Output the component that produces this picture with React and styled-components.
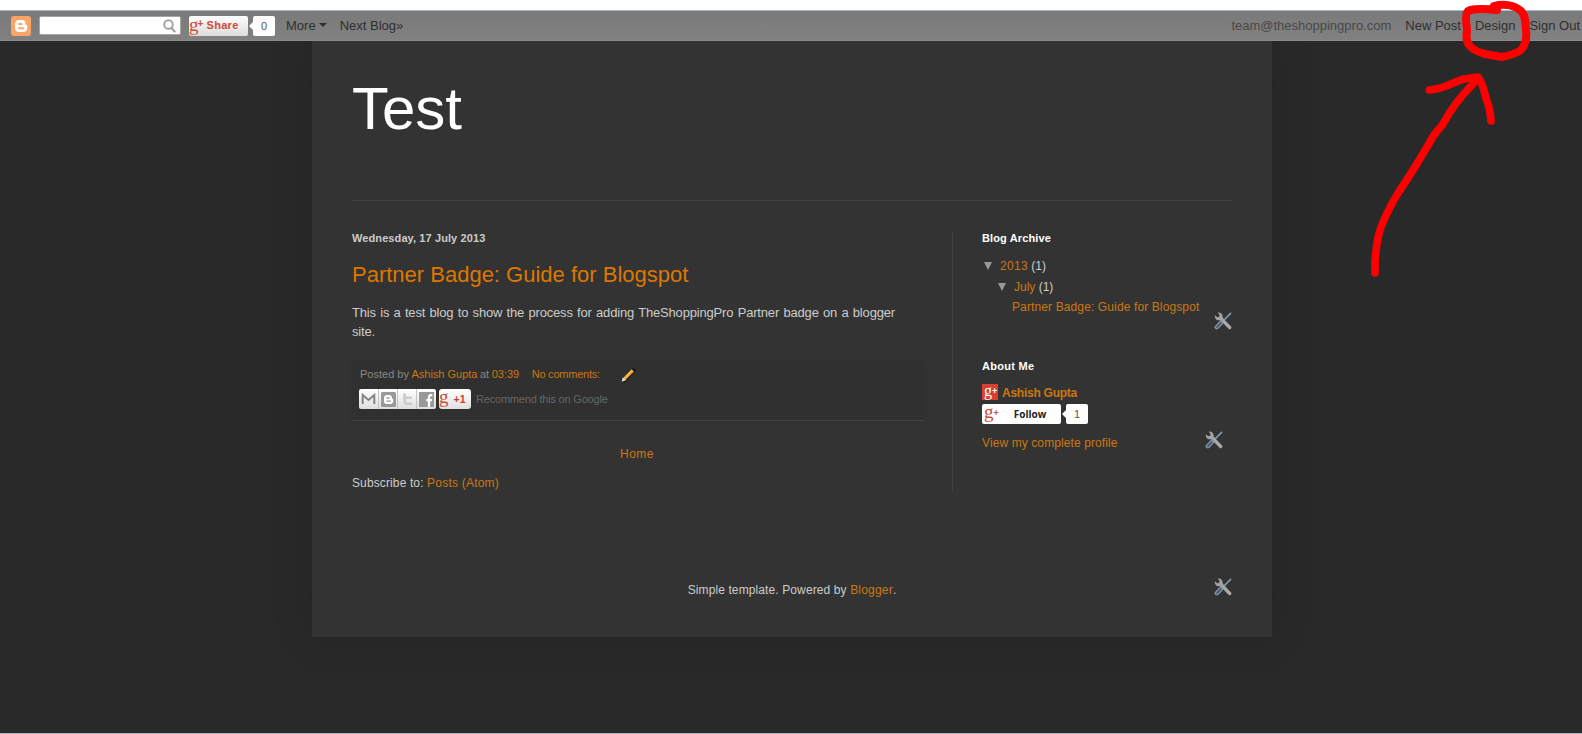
import React from "react";
import styled, { createGlobalStyle } from "styled-components";

const Global = createGlobalStyle`
  * { box-sizing: border-box; }
  html, body, #root { height: 100%; }
  body {
    margin: 0;
    background: #292929;
    font-family: "Liberation Sans", Arial, sans-serif;
    font-size: 12px;
    line-height: 20px;
    color: #ccc;
    overflow: hidden;
  }
`;

const Page = styled.div`
  position: relative;
  display: flex;
  flex-direction: column;
  height: 734px;
  border-bottom: 1px solid #a9b8c4;
`;

const TopStrip = styled.div`
  flex: none;
  height: 11px;
  background: #fff;
  border-bottom: 1px solid #a3bccf;
`;

const NavBar = styled.nav`
  flex: none;
  position: relative;
  z-index: 1;
  display: flex;
  justify-content: space-between;
  height: 30px;
  padding: 5px 2px 0 11px;
  background: linear-gradient(#7a7a7a, #818181);
  border-bottom: 1px solid #8a8a8a;
`;

const NavGroup = styled.div`
  display: flex;
  align-items: flex-start;
`;

const NavLink = styled.a`
  display: flex;
  align-items: center;
  height: 20px;
  margin-left: ${(p) => p.$gap}px;
  font-size: 13px;
  color: ${(p) => (p.$muted ? "#484848" : "#2f2f2f")};
  white-space: nowrap;
`;

const Caret = styled.i`
  margin: -2px 0 0 3px;
  border: 4px solid transparent;
  border-top-color: #2f2f2f;
  border-bottom: 0;
`;

const SearchBox = styled.div`
  display: flex;
  align-items: center;
  justify-content: flex-end;
  width: 142px;
  height: 19px;
  margin-left: 8px;
  padding-right: 4px;
  background: #fff;
  border: 1px solid #a5a5a5;
  border-radius: 2px;
`;

const ShareButton = styled.div`
  display: flex;
  width: 59px;
  height: 20px;
  margin-left: 8px;
  background: linear-gradient(#fefefe, #dcdcdc);
  border-radius: 2px;
  color: #cf4a37;
  font-size: 11px;
  font-weight: bold;
  line-height: 18px;
  letter-spacing: 0.3px;
`;

const SerifG = styled.span`
  font-family: "Liberation Serif", serif;
  font-weight: normal;
  font-size: ${(p) => p.$size}px;
  line-height: ${(p) => p.$line}px;
  letter-spacing: 0;
  color: ${(p) => p.$color || "#cf4a37"};
`;

const SharePlus = styled.span`
  width: 9px;
  margin-left: -1px;
  font-size: 10px;
  line-height: 16px;
`;

const Bubble = styled.div`
  position: relative;
  width: 22px;
  height: 20px;
  margin-left: ${(p) => p.$gap}px;
  background: #fff;
  border-radius: 2px;
  text-align: center;
  font-size: 11px;
  color: #555;
  &::before {
    content: "";
    position: absolute;
    left: -4px;
    top: 6px;
    border: 4px solid transparent;
    border-right-color: #fff;
    border-left: 0;
  }
`;

const Content = styled.main`
  flex: none;
  width: 960px;
  height: 596px;
  margin-left: 312px;
  padding: 0 40px;
  background: #333;
  box-shadow: 0 0 40px rgba(0, 0, 0, 0.12);
`;

const Header = styled.header`
  height: 160px;
  padding-top: 34px;
  border-bottom: 1px solid #404040;
`;

const BlogTitle = styled.h1`
  margin: 0;
  font-size: 60px;
  line-height: 68px;
  font-weight: normal;
  color: #fff;
`;

const Columns = styled.div`
  display: flex;
  height: 265px;
  margin-top: 27px;
`;

const Main = styled.section`
  width: 572px;
`;

const Divider = styled.div`
  width: 1px;
  height: 260px;
  margin: 4px 29px 0 28px;
  background: #424242;
`;

const Sidebar = styled.aside`
  width: 250px;
`;

const Heading = styled.h2`
  margin: 0;
  font-size: 11px;
  line-height: 20px;
  font-weight: bold;
  letter-spacing: ${(p) => p.$ls || 0}px;
  color: ${(p) => (p.$dim ? "#ccc" : "#fff")};
`;

const PostTitle = styled.h3`
  margin: 14px 0 15px;
  font-size: 22px;
  line-height: 26px;
  font-weight: normal;
  color: #dd7700;
`;

const PostBody = styled.p`
  width: 543px;
  margin: 0 0 20px;
  font-size: 13px;
  line-height: 19px;
  letter-spacing: -0.17px;
  text-align: justify;
`;

const Link = styled.a`
  color: #cc7711;
  letter-spacing: ${(p) => p.$ls || 0}px;
  font-weight: ${(p) => (p.$bold ? "bold" : "normal")};
`;

const PostFooter = styled.div`
  height: 60px;
  padding: 3px 8px 0;
  background: #303030;
  border-bottom: 1px solid #444;
  box-shadow: 0 0 3px #303030;
  font-size: 11px;
  color: #888;
`;

const Byline = styled.div`
  display: flex;
  height: 20px;
  gap: 2.5px;
  white-space: nowrap;
`;

const Comments = styled(Link)`
  margin: 0 19px 0 10px;
`;

const EditMark = styled.span`
  margin-top: 3px;
`;

const Reactions = styled.div`
  display: flex;
  height: 20px;
  margin: 5px 0 0 -1px;
  white-space: nowrap;
`;

const ShareStrip = styled.div`
  display: flex;
  width: 77px;
  background: linear-gradient(#fff, #dedede);
  border-radius: 2px;
`;

const ShareCell = styled.span`
  display: flex;
  align-items: center;
  justify-content: center;
  width: 19px;
  height: 20px;
  & + & { border-left: 1px solid #c4c4c4; }
`;

const PlusOne = styled.div`
  display: flex;
  width: 32px;
  margin: 0 5px 0 3px;
  background: linear-gradient(#fff, #e0e0e0);
  border-radius: 3px;
  color: #c8402f;
  font-weight: bold;
  font-size: 10.5px;
`;

const PlusCount = styled.span`
  margin-left: 5px;
`;

const Recommend = styled.span`
  color: #666;
  line-height: 21px;
  letter-spacing: -0.2px;
`;

const HomeRow = styled.div`
  margin-top: 23px;
  padding-right: 2px;
  text-align: center;
`;

const Subscribe = styled.div`
  margin-top: 9px;
  letter-spacing: 0.12px;
`;

const ArchiveRow = styled.div`
  display: flex;
  align-items: center;
  height: 20px;
  margin-top: ${(p) => p.$top}px;
  padding-left: ${(p) => p.$indent}px;
  white-space: pre;
`;

const Triangle = styled.i`
  margin: 0 8px 0 0;
  border: 4px solid transparent;
  border-top: 8px solid #999;
  border-bottom: 0;
`;

const ToolRow = styled.div`
  display: flex;
  justify-content: flex-end;
  height: 18px;
  margin-top: ${(p) => p.$top}px;
`;

const Profile = styled.div`
  display: flex;
  gap: 4px;
  height: 16px;
  margin-top: 8px;
  line-height: 18px;
`;

const GoogleTile = styled.span`
  display: flex;
  width: 16px;
  height: 16px;
  padding-left: 2px;
  background: #d5402f;
  color: #fff;
  font: bold 9px/15px "Liberation Sans", sans-serif;
`;

const FollowRow = styled.div`
  display: flex;
  height: 20px;
  margin-top: 4px;
`;

const FollowButton = styled.div`
  display: flex;
  width: 79px;
  height: 20px;
  padding-left: 2px;
  background: #fff;
  border-radius: 2px;
  color: #cf4a37;
  font-size: 9px;
  font-weight: bold;
  line-height: 19px;
`;

const FollowText = styled.span`
  margin-left: 15px;
  color: #222;
  font: bold 10px/20px "Open Sans", sans-serif;
`;

const ProfileLinkRow = styled.div`
  display: flex;
  justify-content: space-between;
  height: 20px;
  margin-top: 7px;
  padding-right: 9px;
  line-height: 24px;
`;

const Footer = styled.footer`
  display: grid;
  grid-template-columns: 18px 1fr 18px;
  margin-top: 87px;
  line-height: 20px;
  letter-spacing: 0.11px;
  text-align: center;
`;

const FooterTool = styled.span`
  height: 18px;
  margin-top: -2px;
`;

const Annotation = styled.svg`
  position: absolute;
  left: 1360px;
  top: 0;
  z-index: 2;
`;

const Block = styled.svg`
  display: block;
  flex: none;
`;

function BloggerIcon({ size, bg, radius = 3 }) {
  return (
    <Block width={size} height={size} viewBox="0 0 20 20">
      <rect width="20" height="20" rx={radius} fill={bg} />
      <path
        d="M8 4h3.200c2 0 3.300 1.500 3.300 3.200v.8c.1.8.5.9 1 .9.5.1.7.4.7.8v2.500c0 2.300-1.600 3.800-3.800 3.800H8c-2.400 0-4-1.600-4-3.800V8c0-2.300 1.600-4 4-4z"
        fill="#fff"
      />
      <path d="M8 8h2.700M8 12.200h4.400" stroke={bg} strokeWidth="1.900" strokeLinecap="round" />
    </Block>
  );
}

function SearchIcon() {
  return (
    <Block width="13" height="14" viewBox="0 0 13 14">
      <circle cx="5.500" cy="5.500" r="4.300" fill="none" stroke="#a2a2a2" strokeWidth="1.900" />
      <path d="M8.600 9l3 3.400" stroke="#a2a2a2" strokeWidth="2.200" strokeLinecap="round" />
    </Block>
  );
}

function ToolsIcon() {
  return (
    <Block width="18" height="18" viewBox="0 0 18 18">
      <path d="M6.500 11.500L16.600 1.300" stroke="#7f97ab" strokeWidth="1.700" strokeLinecap="round" />
      <path d="M7.500 7l8.200 8.500" stroke="#a9a9a7" strokeWidth="3.300" strokeLinecap="round" />
      <path
        d="M3.600.6l2 2.300-.4 1.900-2 .4L.9 3.300C.4 6.200 2.200 8.300 4.700 8.300c1.400 0 2.200.3 2.900 1l2.100-2.200c-.8-.8-1-1.500-1.100-2.700C8.500 1.900 6.300.1 3.600.6z"
        fill="#a3a3a3"
      />
      <path d="M2.800 15.200l4.200-4.300" stroke="#7d94a9" strokeWidth="4.400" strokeLinecap="round" />
      <path d="M2.900 15.100l3.900-4" stroke="#465462" strokeWidth="1.600" strokeLinecap="round" />
    </Block>
  );
}

function PencilIcon() {
  return (
    <Block width="15" height="16" viewBox="0 0 18 18">
      <path d="M4 15L15 3.500" stroke="#151515" strokeWidth="5" strokeLinecap="round" />
      <path d="M3.600 14.200L14.200 3.500" stroke="#e9a42b" strokeWidth="3.900" />
      <path d="M3.300 13.400L13 3.500" stroke="#ffda7b" strokeWidth="1.200" />
      <path d="M.9 17l1.200-4.900 3.600 3.200z" fill="#f4e9d4" />
    </Block>
  );
}

function MailIcon() {
  return (
    <Block width="15" height="12" viewBox="0 0 15 12">
      <path d="M1.700 11V2l5.800 5 5.800-5v9" fill="none" stroke="#858585" strokeWidth="2" />
    </Block>
  );
}

function TwitterIcon() {
  return (
    <Block width="11" height="13" viewBox="0 0 11 13">
      <path d="M2.500 1.500v6c0 2.200 1 3.300 3 3.300H9M2.500 4.800H8.700" fill="none" stroke="#cbcbcb" strokeWidth="2.600" strokeLinecap="round" />
    </Block>
  );
}

function FacebookIcon() {
  return (
    <Block width="15" height="15" viewBox="0 0 15 15">
      <rect width="15" height="15" fill="#999" />
      <path d="M13.300 3.100h-1.200c-1.500 0-2.100.8-2.100 2.300V15M7.300 8.200h5.700" fill="none" stroke="#fff" strokeWidth="2.200" />
    </Block>
  );
}

function RedMarks() {
  return (
    <Annotation width="222" height="290" viewBox="1360 0 222 290" fill="none" stroke="#fe0000" strokeLinecap="round" strokeLinejoin="round">
      <path
        strokeWidth="8"
        d="M1497 10C1488 9 1474 8 1468 11C1465 14 1466 23 1467 30C1466 37 1466 42 1470 46C1475 52 1480 52 1485 54L1502 57C1510 55 1516 54 1521 50C1526 44 1527 37 1526 30C1525 22 1526 16 1521 11C1514 4.500 1503 3.500 1494 6"
      />
      <path
        strokeWidth="7.600"
        d="M1375 273L1375 261C1376 249 1377 238 1381 227C1387 212 1393 201 1400 190C1411 174 1423 154 1434 135L1443 124C1451 109 1460 97 1472 85L1478 78"
      />
      <path strokeWidth="7.600" d="M1429.500 90C1444 89 1451 83 1464 79L1478 77C1484 84 1484 94 1487 101C1490 108 1490.500 115 1491 121" />
    </Annotation>
  );
}

export default function App() {
  return (
    <Page>
      <Global />
      <TopStrip />
      <NavBar>
        <NavGroup>
          <BloggerIcon size={20} bg="#fba468" />
          <SearchBox><SearchIcon /></SearchBox>
          <ShareButton>
            <SerifG $size={19} $line={17}>g</SerifG>
            <SharePlus>+</SharePlus>
            Share
          </ShareButton>
          <Bubble $gap={5}>0</Bubble>
          <NavLink $gap={11}>More<Caret /></NavLink>
          <NavLink $gap={13}>Next Blog»</NavLink>
        </NavGroup>
        <NavGroup>
          <NavLink $gap={0} $muted>team@theshoppingpro.com</NavLink>
          <NavLink $gap={14}>New Post</NavLink>
          <NavLink $gap={14}>Design</NavLink>
          <NavLink $gap={14}>Sign Out</NavLink>
        </NavGroup>
      </NavBar>
      <Content>
        <Header>
          <BlogTitle>Test</BlogTitle>
        </Header>
        <Columns>
          <Main>
            <Heading $dim $ls={0.1}>Wednesday, 17 July 2013</Heading>
            <PostTitle>Partner Badge: Guide for Blogspot</PostTitle>
            <PostBody>
              This is a test blog to show the process for adding TheShoppingPro Partner badge on a blogger site.
            </PostBody>
            <PostFooter>
              <Byline>
                <span>Posted by</span>
                <Link>Ashish Gupta</Link>
                <span>at</span>
                <Link>03:39</Link>
                <Comments $ls={-0.23}>No comments:</Comments>
                <EditMark><PencilIcon /></EditMark>
              </Byline>
              <Reactions>
                <ShareStrip>
                  <ShareCell><MailIcon /></ShareCell>
                  <ShareCell><BloggerIcon size={15} bg="#999" radius={2} /></ShareCell>
                  <ShareCell><TwitterIcon /></ShareCell>
                  <ShareCell><FacebookIcon /></ShareCell>
                </ShareStrip>
                <PlusOne>
                  <SerifG $size={19} $line={16}>g</SerifG>
                  <PlusCount>+1</PlusCount>
                </PlusOne>
                <Recommend>Recommend this on Google</Recommend>
              </Reactions>
            </PostFooter>
            <HomeRow><Link $ls={0.5}>Home</Link></HomeRow>
            <Subscribe>Subscribe to: <Link $ls={0.22}>Posts (Atom)</Link></Subscribe>
          </Main>
          <Divider />
          <Sidebar>
            <Heading $ls={0.12}>Blog Archive</Heading>
            <ArchiveRow $top={8} $indent={2}><Triangle /><Link $ls={0.3}>2013</Link> (1)</ArchiveRow>
            <ArchiveRow $top={1} $indent={16}><Triangle /><Link>July</Link> (1)</ArchiveRow>
            <ArchiveRow $top={0} $indent={30}><Link $ls={0.12}>Partner Badge: Guide for Blogspot</Link></ArchiveRow>
            <ToolRow $top={-5}><ToolsIcon /></ToolRow>
            <ArchiveRow $top={26} $indent={0}><Heading $ls={0.3}>About Me</Heading></ArchiveRow>
            <Profile>
              <GoogleTile><SerifG $size={16} $line={13} $color="#fff">g</SerifG>+</GoogleTile>
              <Link $bold $ls={-0.25}>Ashish Gupta</Link>
            </Profile>
            <FollowRow>
              <FollowButton>
                <SerifG $size={19} $line={16}>g</SerifG>+
                <FollowText>Follow</FollowText>
              </FollowButton>
              <Bubble $gap={5}>1</Bubble>
            </FollowRow>
            <ProfileLinkRow><Link $ls={0.1}>View my complete profile</Link><ToolsIcon /></ProfileLinkRow>
          </Sidebar>
        </Columns>
        <Footer>
          <span />
          <span>Simple template. Powered by <Link $ls={0.2}>Blogger</Link>.</span>
          <FooterTool><ToolsIcon /></FooterTool>
        </Footer>
      </Content>
      <RedMarks />
    </Page>
  );
}
